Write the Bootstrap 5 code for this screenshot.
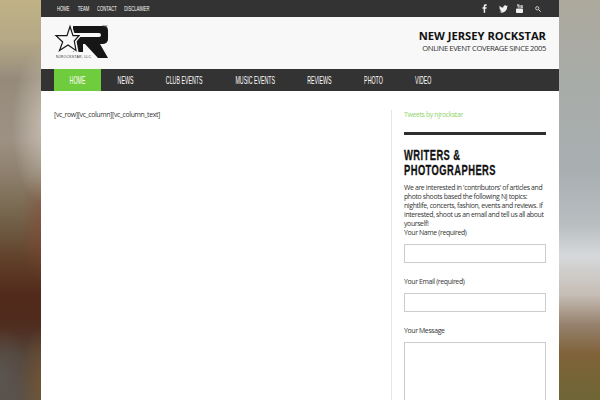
<!DOCTYPE html>
<html lang="en">
<head>
  <meta charset="UTF-8">
  <title>New Jersey Rockstar</title>
  <meta name="viewport" content="width=device-width, initial-scale=1">
  <link href="https://cdn.jsdelivr.net/npm/bootstrap@5.3.0/dist/css/bootstrap.min.css" rel="stylesheet">
  <style>
    html, body { height: 400px; overflow: hidden; }
    body {
      font-family: "Open Sans", "Liberation Sans", sans-serif;
      font-size: 6.9px;
      letter-spacing: -.36px;
      line-height: 9px;
      color: #333;
      background:
        radial-gradient(ellipse 34px 80px at 46px 125px, rgba(226,220,208,.6), rgba(226,220,208,0)),
        radial-gradient(ellipse 26px 60px at 46px 225px, rgba(140,70,50,.55), rgba(140,70,50,0)),
        radial-gradient(ellipse 30px 50px at 0 375px, rgba(95,95,95,.5), rgba(95,95,95,0)),
        radial-gradient(ellipse 28px 60px at 46px 385px, rgba(130,90,45,.7), rgba(130,90,45,0)),
        linear-gradient(180deg, #c0b285 0, #b5a987 40px, #968b7b 80px, #9d9184 140px, #8d7f6c 175px, #75654d 215px, #60402a 260px, #52291a 295px, #4f2c1e 325px, #54453a 355px, #595048 400px) left top / 50% 100% no-repeat,
        linear-gradient(180deg, #ada99d 0, #a8aca8 80px, #a8afb1 170px, #b9bec1 225px, #d6d9dc 255px, #c6bdb4 295px, #95806c 325px, #7f6238 355px, #6e6636 400px) right top / 50% 100% no-repeat;
    }
    .page-wrap { width: 518px; height: 400px; margin: 0 auto; background: #fff; overflow: hidden; }

    /* no condensed face here, so the narrow headline look is a squeezed span */
    .squeeze { display: inline-block; white-space: nowrap; transform: scaleX(.55); }
    .main-menu .squeeze { transform: scaleX(.48); }

    .top-strip { height: 17px; background: #333; padding: 0 18px 0 16px; }
    .top-strip a, .main-menu a { font-family: "Liberation Sans", sans-serif; letter-spacing: 0; color: #fff; text-decoration: none; text-transform: uppercase; display: flex; justify-content: center; }
    .top-strip a { font-size: 7.5px; line-height: 17px; }
    .top-links { gap: 8.5px; }
    .top-links a:nth-child(1) { width: 12px; }
    .top-links a:nth-child(2) { width: 11px; }
    .top-links a:nth-child(3) { width: 19px; }
    .top-links a:nth-child(4) { width: 25px; }
    .tw-icon { margin-left: 12px; }
    .yt-icon { margin-left: 8px; }
    .find-icon { margin-left: 12px; }

    .brand-row { height: 52px; background: #f8f8f8; padding: 7px 13px 0 13px; }
    .brand-title { font-size: 11.2px; letter-spacing: 0; line-height: 12px; font-weight: 700; color: #111; margin: 6px 0 0; }
    .brand-sub { font-size: 7.7px; letter-spacing: -.42px; line-height: 10px; color: #333; margin: 1px 0 0; }

    .main-menu { height: 22px; background: #333; padding-left: 13px; }
    .main-menu a { font-size: 11px; line-height: 22px; }
    .main-menu a.is-current { background: #6fcc3c; color: #fff; }
    .main-menu a:nth-child(1) { width: 47px; }
    .main-menu a:nth-child(2) { width: 49px; }
    .main-menu a:nth-child(3) { width: 68px; }
    .main-menu a:nth-child(4) { width: 74px; }
    .main-menu a:nth-child(5) { width: 55px; }
    .main-menu a:nth-child(6) { width: 53px; }
    .main-menu a:nth-child(7) { width: 47px; }

    .content-row { padding: 19px 13px 0 13px; }
    .main-col { width: 337px; }
    .side-col { width: 155px; border-left: 1px solid #e6e6e6; padding-left: 12px; height: 300px; }
    .tweet-link { color: #8fd36b; text-decoration: none; display: block; }
    .side-rule { height: 3px; background: #2e2e2e; margin: 13px 0 13px; }
    .side-head { font-family: "Liberation Sans", sans-serif; font-weight: 700; font-size: 14.5px; line-height: 15px; letter-spacing: .7px; -webkit-text-stroke: .3px #111; color: #111; text-transform: uppercase; margin: 0 0 5px; width: 230px; transform: scaleX(.645); transform-origin: left center; }
    .side-form label { display: block; }
    .field-box { display: block; width: 142px; height: 19px; border: 1px solid #ccc; background: #fff; border-radius: 0; padding: 0; margin-top: 7px; }
    .field-area { height: 90px; resize: none; }
    .next-label { margin-top: 14px; }
  </style>
</head>
<body>
  <div class="page-wrap">
    <div class="top-strip d-flex justify-content-between align-items-center">
      <div class="top-links d-flex">
        <a href="#"><span class="squeeze">Home</span></a>
        <a href="#"><span class="squeeze">Team</span></a>
        <a href="#"><span class="squeeze">Contact</span></a>
        <a href="#"><span class="squeeze">Disclaimer</span></a>
      </div>
      <div class="d-flex align-items-center">
        <svg width="5" height="9" viewBox="0 0 6 10"><path fill="#f0f0f0" d="M2 10V5.4H.5V3.6H2V2.3C2 .8 2.9 0 4.2 0h1.4v1.8h-1c-.6 0-.8.3-.8.8v1h1.800l-.3 1.800H3.800V10z"/></svg>
        <svg class="tw-icon" width="9" height="8" viewBox="0 0 11 9"><path fill="#f0f0f0" d="M11 1.100c-.4.200-.8.300-1.300.4.500-.3.800-.7 1-1.200-.4.300-.9.400-1.400.5C8.900.3 8.300 0 7.600 0 6.300 0 5.300 1 5.300 2.300c0 .2 0 .3.100.5C3.500 2.700 1.800 1.800.8.400.6.800.5 1.200.5 1.600c0 .8.400 1.500 1 1.900-.4 0-.7-.1-1-.3 0 1.100.8 2 1.800 2.200-.2.100-.4.100-.6.100H1.300c.3.900 1.100 1.600 2.100 1.600C2.600 7.700 1.600 8 .6 8H0c1 .6 2.200 1 3.500 1 4.100 0 6.400-3.500 6.400-6.500v-.3c.4-.3.800-.7 1.100-1.100z"/></svg>
        <svg class="yt-icon" width="7" height="9" viewBox="0 0 8 10"><path fill="#f0f0f0" d="M1 0h1l.5 1.500L3 0h1L3 2.400V4H2V2.400zM4 1.200h1.200V4H4zM5.800 1h.8v2.400h.8V1H8v3H5.800zM1 5h6c.6 0 1 .4 1 1v3c0 .6-.4 1-1 1H1c-.6 0-1-.4-1-1V6c0-.6.400-1 1-1z"/></svg>
        <svg class="find-icon" width="6" height="6" viewBox="0 0 8 8"><circle cx="3" cy="3" r="2.200" fill="none" stroke="#f0f0f0" stroke-width="1"/><path d="M4.700 4.700 7.500 7.500" stroke="#f0f0f0" stroke-width="1.300"/></svg>
      </div>
    </div>

    <div class="brand-row d-flex justify-content-between align-items-start">
      <svg width="56" height="38" viewBox="0 0 56 38">
        <path fill="#161616" fill-rule="evenodd" d="M19 2H50Q54 2 54 7V15Q54 20 48 20H46L54 34H44L31 20H29V28H19ZM19 9V13H45Q47 13 47 11Q47 9 45 9Z"/>
        <path fill="#f8f8f8" stroke="#f8f8f8" stroke-width="3" d="M16 1L19.500 11H26L21 17L23 28L14 22L4 28L8 18L0 11H12.500Z"/>
        <path fill="#f8f8f8" stroke="#161616" stroke-width="1.200" d="M16 2.500L19 11.700H25L20.300 17L22 26.500L14 21L5.500 26.500L8.700 18L2 11.700H13Z"/>
        <text x="48" y="4" font-size="3.500" letter-spacing="0" fill="#333" font-family="Liberation Sans, sans-serif">TM</text>
        <text x="2" y="33.500" font-size="3.500" letter-spacing="0" fill="#333" font-family="Liberation Sans, sans-serif" textLength="35">NJROCKSTAR, LLC</text>
      </svg>
      <div class="text-end">
        <p class="brand-title">NEW JERSEY ROCKSTAR</p>
        <p class="brand-sub">ONLINE EVENT COVERAGE SINCE 2005</p>
      </div>
    </div>

    <nav class="main-menu d-flex">
      <a href="#" class="is-current"><span class="squeeze">Home</span></a>
      <a href="#"><span class="squeeze">News</span></a>
      <a href="#"><span class="squeeze">Club Events</span></a>
      <a href="#"><span class="squeeze">Music Events</span></a>
      <a href="#"><span class="squeeze">Reviews</span></a>
      <a href="#"><span class="squeeze">Photo</span></a>
      <a href="#"><span class="squeeze">Video</span></a>
    </nav>

    <div class="content-row d-flex">
      <div class="main-col">[vc_row][vc_column][vc_column_text]</div>
      <div class="side-col">
        <a href="#" class="tweet-link">Tweets by njrockstar</a>
        <div class="side-rule"></div>
        <h3 class="side-head">Writers &amp;<br>Photographers</h3>
        <p class="mb-0">We are interested in 'contributors' of articles and photo shoots based the following NJ topics: nightlife, concerts, fashion, events and reviews. If interested, shoot us an email and tell us all about yourself!</p>
        <form class="side-form">
          <label for="fName">Your Name (required)</label>
          <input id="fName" type="text" class="field-box">
          <label for="fMail" class="next-label">Your Email (required)</label>
          <input id="fMail" type="text" class="field-box">
          <label for="fMsg" class="next-label">Your Message</label>
          <textarea id="fMsg" class="field-box field-area"></textarea>
        </form>
      </div>
    </div>
  </div>
  <script src="https://cdn.jsdelivr.net/npm/bootstrap@5.3.0/dist/js/bootstrap.bundle.min.js"></script>
</body>
</html>
